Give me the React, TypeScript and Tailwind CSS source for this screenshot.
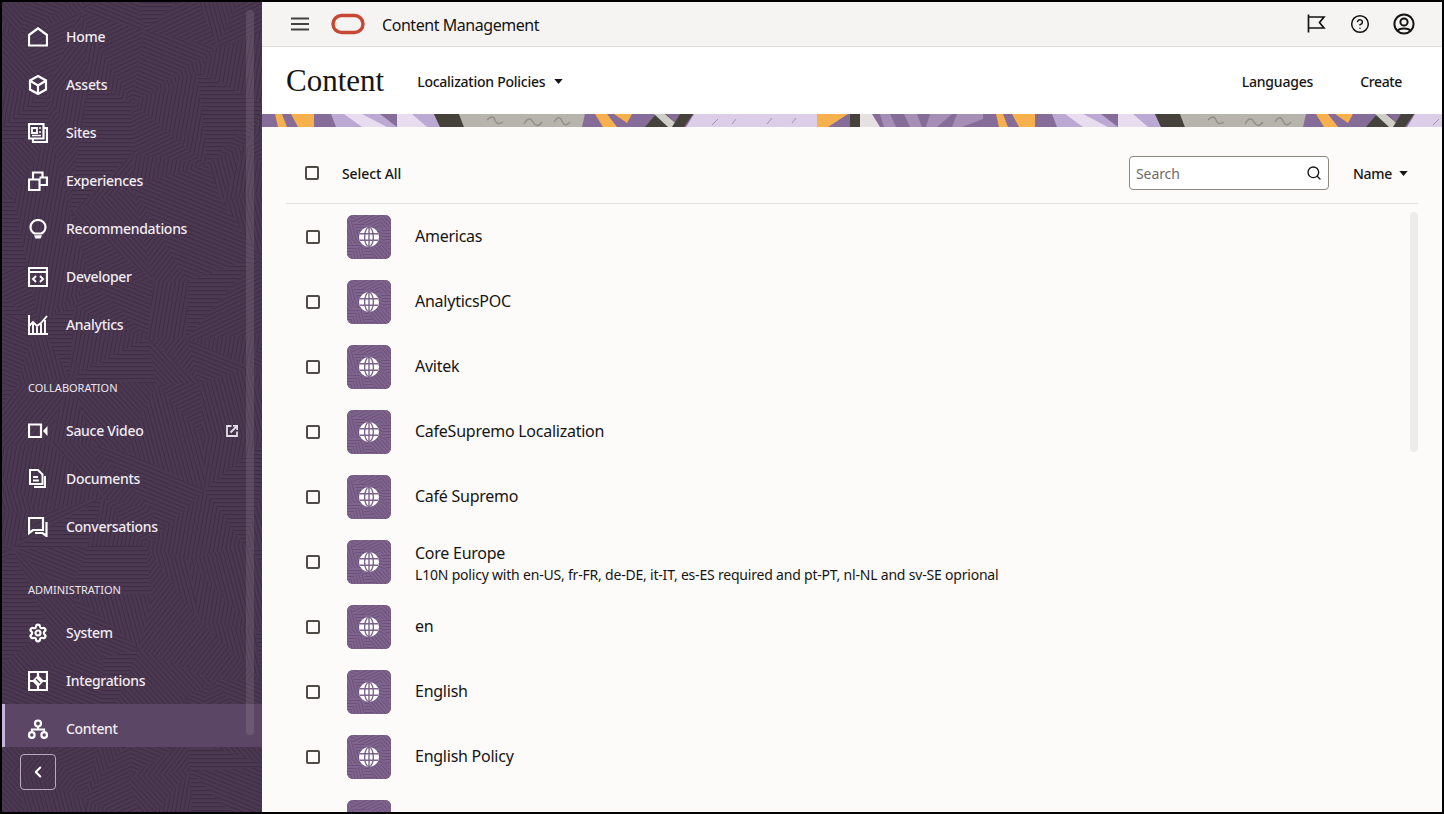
import { Search, Settings, CircleHelp, ChevronLeft } from 'lucide-react';
import type { ReactNode } from 'react';

// small seeded rng so the hatch texture is the same on every load
function makeRng(seed: number) {
  let s = seed;
  return () => {
    s = (s * 1664525 + 1013904223) % 4294967296;
    return s / 4294967296;
  };
}

const ANGLES = [0, 22, 48, 75, 100, 128, 155];

function hatchPolys(w: number, h: number, cell: number, seed: number) {
  const rnd = makeRng(seed);
  const cols = Math.ceil(w / cell) + 2;
  const rows = Math.ceil(h / cell) + 2;
  const pts: [number, number][][] = [];
  for (let r = 0; r < rows; r++) {
    const row: [number, number][] = [];
    for (let c = 0; c < cols; c++) {
      row.push([(c - 0.5) * cell + (rnd() - 0.5) * cell * 0.7, (r - 0.5) * cell + (rnd() - 0.5) * cell * 0.7]);
    }
    pts.push(row);
  }
  const polys: { points: string; a: number }[] = [];
  for (let r = 0; r < rows - 1; r++) {
    for (let c = 0; c < cols - 1; c++) {
      const q = [pts[r][c], pts[r][c + 1], pts[r + 1][c + 1], pts[r + 1][c]];
      const a = Math.floor(rnd() * ANGLES.length);
      const b = Math.floor(rnd() * ANGLES.length);
      if (rnd() > 0.5) {
        polys.push({ points: [q[0], q[1], q[2]].join(' '), a });
        polys.push({ points: [q[0], q[2], q[3]].join(' '), a: b });
      } else {
        polys.push({ points: [q[0], q[1], q[3]].join(' '), a });
        polys.push({ points: [q[1], q[2], q[3]].join(' '), a: b });
      }
    }
  }
  return polys;
}

const sidePolys = hatchPolys(260, 810, 58, 23);
const tilePolys = hatchPolys(44, 44, 22, 5);

function SideTexture() {
  return (
    <svg className="absolute inset-0 h-full w-full" width="260" height="810">
      <defs>
        {ANGLES.map((a, i) => (
          <pattern key={a} id={`side${i}`} width="4" height="4" patternUnits="userSpaceOnUse" patternTransform={`rotate(${a})`}>
            <rect width="4" height="4" fill="#4b3952" />
            <rect width="4" height="1.2" fill="#3e2d45" />
          </pattern>
        ))}
      </defs>
      {sidePolys.map((p, i) => (
        <polygon key={i} points={p.points} fill={`url(#side${p.a})`} />
      ))}
    </svg>
  );
}

function Ico({ children, className = '' }: { children: ReactNode; className?: string }) {
  return (
    <svg
      viewBox="0 0 20 20"
      width="20"
      height="20"
      fill="none"
      stroke="currentColor"
      strokeWidth="2.2"
      strokeLinejoin="miter"
      className={`shrink-0 ${className}`}
    >
      {children}
    </svg>
  );
}

const icons: Record<string, ReactNode> = {
  home: <Ico><path d="M1 8 L10 1.3 L19 8 V18.5 H1 Z" /></Ico>,
  assets: <Ico><path d="M10 1 L18 5.5 V14.5 L10 19 L2 14.5 V5.5 Z M2.5 6 L10 10.5 L17.5 6 M10 10.5 V19" /></Ico>,
  sites: (
    <Ico>
      <path d="M1 1 H15.5 V15.5 H1 Z M16 5 H19 V19 H5 V16" />
      <path d="M4 5 H9 V10 H4 Z" strokeWidth="1.8" />
      <path d="M11 5 H13 M11 9 H13 M4 12.5 H13" strokeWidth="1.3" />
    </Ico>
  ),
  experiences: <Ico><path d="M1 8.5 H11.5 V19 H1 Z M5 8 V1.5 H14.5 V6 M11.5 6.5 H19 V14 H12" /></Ico>,
  recommendations: (
    <Ico>
      <path d="M6.5 14.5 C4 13 2.5 10.5 2.5 8 a7.5 7 0 0 1 15 0 C17.5 10.5 16 13 13.5 14.5 Z" />
      <path d="M6 16.2 H14 L12.6 19.6 H7.4 Z" fill="currentColor" stroke="none" />
    </Ico>
  ),
  developer: (
    <Ico>
      <path d="M1 1 H19 V19 H1 Z M1 5 H19" />
      <path d="M8 9 L5 12 L8 15 M12 9 L15 12 L12 15" strokeWidth="1.9" />
    </Ico>
  ),
  analytics: <Ico><path d="M1 0 V19 H20 M1 11 L5 7 L9 11 L13 8 L19 1 M5 8 V19 M9 12 V19 M13 9 V19 M17 5 V19" strokeWidth="1.9" /></Ico>,
  video: (
    <Ico>
      <path d="M1 1.5 H13 V14 H1 Z" transform="translate(0 2)" />
      <path d="M15 10 L19.5 5 V15 Z" fill="currentColor" stroke="none" />
    </Ico>
  ),
  documents: <Ico><path d="M2 1 H10 L14.5 5.5 V15 H2 Z M5 8 H10 M5 11.5 H11 M17 7 V18 H6" strokeWidth="2" /></Ico>,
  conversations: <Ico><path d="M1 1 H15 V13 H5 L1 16 Z M18.5 5 V19 L14.5 16 H7" /></Ico>,
  system: <Settings size={20} strokeWidth={2.6} className="shrink-0" />,
  integrations: (
    <Ico>
      <path d="M1 1 H19 V19 H1 Z" />
      <path d="M10 1 V5 M10 15 V19 M1 10 H5 M15 10 H19" />
      <path d="M10 4 L16 10 L10 16 L4 10 Z" fill="currentColor" stroke="none" />
      <path d="M8 8 L12 12" strokeWidth="1.3" stroke="#4b3952" />
    </Ico>
  ),
  content: (
    <Ico>
      <circle cx="10" cy="4.5" r="3" />
      <circle cx="3.8" cy="16" r="2.8" />
      <circle cx="16.2" cy="16" r="2.8" />
      <path d="M10 7.5 V10.5 M3.8 13 V10.5 H16.2 V13" strokeWidth="1.8" />
    </Ico>
  ),
};

function NavItem({ icon, label, active, extra }: { icon: string; label: string; active?: boolean; extra?: ReactNode }) {
  return (
    <div
      className={`flex shrink-0 items-center gap-[18px] pr-6 text-[14px] font-medium tracking-[-0.3px] text-[#f1ebf2] ${
        active ? '-mt-px h-[49px] border-l-[3px] border-[#c6b4d8] bg-[#5b4765] pl-[23px] pt-px' : 'h-12 pl-[26px]'
      }`}
    >
      <span className="text-white">{icons[icon]}</span>
      <span className="flex-1 pb-[2px]">{label}</span>
      {extra}
    </div>
  );
}

function NavHeading({ label }: { label: string }) {
  return (
    <div className="flex h-[58px] shrink-0 items-end pb-[11px] pl-[26px] text-[11px] leading-4 text-[#ece5ee]">
      {label}
    </div>
  );
}

function Sidebar() {
  return (
    <aside className="relative flex h-full w-[260px] shrink-0 flex-col overflow-hidden bg-[#4a3850]">
      <SideTexture />
      <div className="relative flex h-[745px] shrink-0 flex-col overflow-hidden pt-[11px]">
        <NavItem icon="home" label="Home" />
        <NavItem icon="assets" label="Assets" />
        <NavItem icon="sites" label="Sites" />
        <NavItem icon="experiences" label="Experiences" />
        <NavItem icon="recommendations" label="Recommendations" />
        <NavItem icon="developer" label="Developer" />
        <NavItem icon="analytics" label="Analytics" />
        <NavHeading label="COLLABORATION" />
        <NavItem
          icon="video"
          label="Sauce Video"
          extra={
            <svg viewBox="0 0 12 12" width="12" height="12" fill="none" stroke="#e4dce8" strokeWidth="1.8" className="shrink-0">
              <path d="M5.5 1 H1 V11 H11 V6.5" />
              <path d="M4.5 7.5 L11 1 M7 0.8 H11.2 V5" />
            </svg>
          }
        />
        <NavItem icon="documents" label="Documents" />
        <NavItem icon="conversations" label="Conversations" />
        <NavHeading label="ADMINISTRATION" />
        <NavItem icon="system" label="System" />
        <NavItem icon="integrations" label="Integrations" />
        <NavItem icon="content" label="Content" active />
        <div className="absolute right-2 top-2 h-[725px] w-2 rounded bg-white/10" />
      </div>
      <div className="relative pl-[18px] pt-[7px]">
        <button className="flex h-9 w-9 items-center justify-center rounded border border-[#b9a9c4] text-white">
          <ChevronLeft size={18} strokeWidth={2.8} />
        </button>
      </div>
    </aside>
  );
}

function OracleLogo() {
  return (
    <svg viewBox="0 0 34 22" width="34" height="22" className="shrink-0">
      <rect x="2" y="2.5" width="30" height="17" rx="8.5" fill="none" stroke="#c74634" strokeWidth="3.4" />
    </svg>
  );
}

function TopBar() {
  return (
    <header className="flex h-[45px] shrink-0 items-center border-b border-[#dfdddb] bg-[#f5f4f2] pl-[29px] pr-[27px]">
      <svg viewBox="0 0 18 14" width="18" height="14" stroke="#45433f" strokeWidth="2" className="shrink-0">
        <path d="M0 1.5 H18 M0 7 H18 M0 12.5 H18" />
      </svg>
      <span className="ml-[22px]"><OracleLogo /></span>
      <span className="ml-[17px] flex-1 pt-[1px] text-[16px] tracking-[-0.45px] text-[#161513]">Content Management</span>
      <div className="flex items-center gap-[23px] text-[#161513]">
        <svg viewBox="0 0 20 20" width="20" height="20" fill="none" stroke="currentColor" strokeWidth="1.7" className="mr-px">
          <path d="M2.5 0.5 V18.5 M2.5 3 H18 L13.5 8.5 L18 14 H2.5" />
        </svg>
        <CircleHelp size={20} strokeWidth={1.8} />
        <svg viewBox="0 0 22 22" width="22" height="22" fill="none" stroke="currentColor" strokeWidth="2">
          <circle cx="11" cy="11" r="9.6" />
          <circle cx="11" cy="9" r="3.6" />
          <path d="M4.5 18 C6 14.5 16 14.5 17.5 18" />
        </svg>
      </div>
    </header>
  );
}

function Caret() {
  return (
    <svg viewBox="0 0 10 6" width="9" height="5" className="shrink-0">
      <path d="M0 0 H10 L5 6 Z" fill="#161513" />
    </svg>
  );
}

function PageHeader() {
  return (
    <div className="flex h-[67px] shrink-0 items-center bg-white pl-6 pr-[40px]">
      <h1 className="font-['Liberation_Serif'] text-[31px] leading-9 text-[#161513]">Content</h1>
      <div className="ml-[33px] flex flex-1 items-center gap-[9px] pt-[2px] text-[14px] font-medium tracking-[-0.25px] text-[#161513]">
        Localization Policies <Caret />
      </div>
      <span className="pt-[2px] text-[14px] font-medium tracking-[-0.2px] text-[#161513]">Languages</span>
      <span className="ml-[47px] pt-[2px] text-[14px] font-medium tracking-[-0.35px] text-[#161513]">Create</span>
    </div>
  );
}

// one 721px wide piece of the brand strip, it repeats along the page
function Banner() {
  return (
    <svg className="block h-[13px] w-full shrink-0" height="13">
      <defs>
        <pattern id="strip" width="721" height="13" patternUnits="userSpaceOnUse">
          <rect width="721" height="13" fill="#866c98" />
          <path d="M13 0 H20 L25 13 H16 Z M29 0 H52 V13 H36 Z" fill="#f6b04d" />
          <path d="M69 0 H118 L135 13 H74 Z" fill="#bba8d3" />
          <path d="M82 0 H100 L125 13 H100 Z" fill="#e8dcef" />
          <path d="M118 0 H135 V7 Z" fill="#866c98" />
          <path d="M135 0 H153 L178 13 H135 Z" fill="#e8dcef" />
          <path d="M150 0 H172 L178 13 H165 Z" fill="#bba8d3" />
          <path d="M172 0 H197 L202 13 H178 Z" fill="#45423c" />
          <path d="M197 0 H323 L320 13 H202 Z" fill="#b6b4ad" />
          <path d="M225 6 q6 -6 8 0 t8 2 M262 10 q5 -9 9 -2 t9 0 M292 8 q5 -8 8 -1 t8 1" fill="none" stroke="#8f8d87" strokeWidth="1.3" />
          <path d="M333 0 H345 L355 13 H341 Z M352 0 H370 L365 9 Z" fill="#f6b04d" />
          <path d="M383 13 L394 0 H404 L418 13 Z" fill="#45423c" />
          <path d="M392 0 H403 L418 13 H406 Z" fill="#d0cec8" />
          <path d="M418 0 H431 L422 13 H410 Z" fill="#45423c" />
          <path d="M432 0 H555 V13 H424 Z" fill="#dccde8" />
          <path d="M450 11 l6 -6 M470 10 l4 -5 M505 10 l5 -6 M530 9 l4 -5" stroke="#a48fb4" strokeWidth="1" />
          <path d="M555 0 H586 L566 13 H555 Z" fill="#f6b04d" />
          <path d="M586 0 H598 V13 H586 Z" fill="#866c98" />
          <path d="M588 0 H598 V13 H588 Z" fill="#45423c" />
          <path d="M598 0 H610 L618 13 H598 Z" fill="#e6e1e0" />
          <path d="M618 0 H628 L634 13 H622 Z M642 0 H655 L660 13 H648 Z M668 0 H690 L675 13 H664 Z M695 0 H721 V5 L700 13 H690 Z" fill="#a58fb6" />
        </pattern>
      </defs>
      <rect width="100%" height="13" fill="url(#strip)" />
    </svg>
  );
}

function PolicyIcon() {
  return (
    <div className="relative h-11 w-11 shrink-0 overflow-hidden rounded-md bg-[#7d638c]">
      <svg width="44" height="44" className="absolute inset-0">
        <defs>
          {ANGLES.map((a, i) => (
            <pattern key={a} id={`tile${i}`} width="3" height="3" patternUnits="userSpaceOnUse" patternTransform={`rotate(${a})`}>
              <rect width="3" height="3" fill="#7f658e" />
              <rect width="3" height="0.9" fill="#6a5079" />
            </pattern>
          ))}
        </defs>
        {tilePolys.map((p, i) => (
          <polygon key={i} points={p.points} fill={`url(#tile${p.a})`} />
        ))}
        <circle cx="22" cy="22" r="10" fill="#fff" />
        <g fill="none" stroke="#7d638c" strokeWidth="1.4">
          <ellipse cx="22" cy="22" rx="4.4" ry="9.6" />
          <path d="M22 12 V32 M13 18.7 H31 M13 25.3 H31" />
        </g>
      </svg>
    </div>
  );
}

const policies = [
  { name: 'Americas' },
  { name: 'AnalyticsPOC' },
  { name: 'Avitek' },
  { name: 'CafeSupremo Localization' },
  { name: 'Café Supremo' },
  { name: 'Core Europe', desc: 'L10N policy with en-US, fr-FR, de-DE, it-IT, es-ES required and pt-PT, nl-NL and sv-SE oprional' },
  { name: 'en' },
  { name: 'English' },
  { name: 'English Policy' },
  { name: '' },
];

function Check() {
  return <span className="block h-[14px] w-[14px] shrink-0 rounded-[2px] border-2 border-[#4f4c48]" />;
}

function Toolbar() {
  return (
    <div className="mx-6 flex h-[77px] shrink-0 items-center border-b border-[#e4e2df] pl-[19px] pr-[10px] pt-[16px]">
      <Check />
      <span className="ml-[23px] flex-1 text-[14px] font-medium tracking-[-0.1px] text-[#161513]">Select All</span>
      <div className="flex h-[34px] w-[200px] items-center justify-between rounded border border-[#8b8781] bg-white pl-[6px] pr-[6px]">
        <span className="text-[14px] tracking-[-0.1px] text-[#6f6c67]">Search</span>
        <Search size={16} strokeWidth={2} className="text-[#161513]" />
      </div>
      <div className="ml-6 flex items-center gap-[7px] text-[14px] font-medium tracking-[-0.3px] text-[#161513]">
        Name <Caret />
      </div>
    </div>
  );
}

function PolicyList() {
  return (
    <div className="relative flex-1 overflow-hidden">
      {policies.map((p) => (
        <div key={p.name} className="flex h-[65px] items-center pl-[44px]">
          <Check />
          <span className="ml-[27px]"><PolicyIcon /></span>
          <div className={`ml-6 text-[#161513] ${p.desc ? 'pt-[4px]' : 'pb-[2px]'}`}>
            <div className="text-[16px] leading-[22px] tracking-[-0.25px]">{p.name}</div>
            {p.desc && <div className="mt-[1px] text-[14px] leading-[20px] tracking-[-0.2px]">{p.desc}</div>}
          </div>
        </div>
      ))}
      <div className="absolute right-[24px] top-2 h-[240px] w-2 rounded bg-[#eeeceb]" />
    </div>
  );
}

export default function App() {
  return (
    <div className="flex h-screen w-screen overflow-hidden border-2 border-black bg-[#fcfbf9] font-['Noto_Sans',sans-serif]">
      <Sidebar />
      <main className="flex min-w-0 flex-1 flex-col">
        <TopBar />
        <PageHeader />
        <Banner />
        <Toolbar />
        <PolicyList />
      </main>
    </div>
  );
}
